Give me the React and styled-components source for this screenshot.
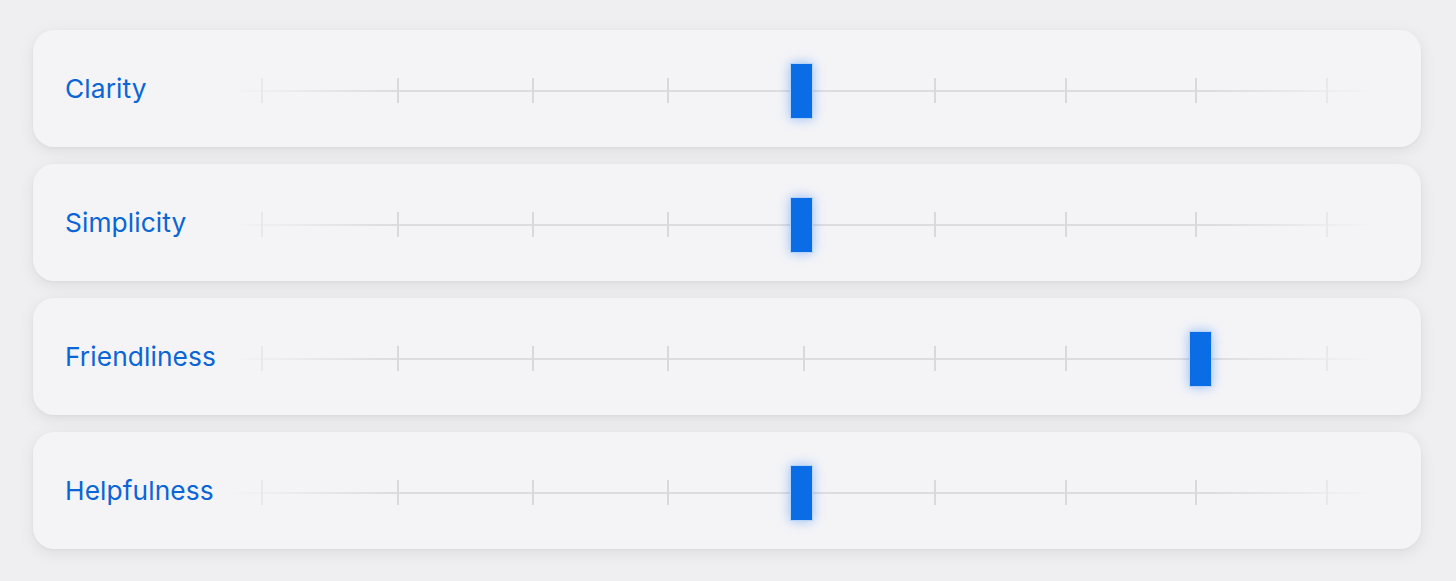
import React from 'react';
import styled, { createGlobalStyle } from 'styled-components';

const GlobalStyle = createGlobalStyle`
  html, body {
    margin: 0;
    padding: 0;
    background: #efeff1;
    font-family: Inter, "Noto Sans", sans-serif;
  }
`;

const Page = styled.div`
  display: flex;
  flex-direction: column;
  gap: 17px;
  padding: 30px 35px 31px 33px;
  box-sizing: border-box;
  width: 1456px;
  height: 581px;
`;

const Card = styled.div`
  display: flex;
  align-items: center;
  height: 117px;
  padding: 0 46px 0 32px;
  box-sizing: border-box;
  background: #f4f4f7;
  border-radius: 21px;
  box-shadow: 0 4px 16px rgba(0, 0, 0, 0.08), 0 1px 3px rgba(0, 0, 0, 0.04);
`;

const Label = styled.div`
  width: 165px;
  flex-shrink: 0;
  font-size: 26.3px;
  font-weight: 400;
  color: #0a65d6;
  letter-spacing: 0.1px;
`;

const Track = styled.div`
  position: relative;
  flex: 1;
  height: 60px;
  margin-top: 4px;
`;

const Line = styled.div`
  position: absolute;
  left: 0;
  right: 0;
  top: 29px;
  height: 2px;
  background: linear-gradient(
    to right,
    rgba(220, 220, 224, 0) 0%,
    #dddde1 14%,
    #dddde1 86%,
    rgba(220, 220, 224, 0) 100%
  );
`;

const Tick = styled.div`
  position: absolute;
  top: 17px;
  width: 2px;
  height: 25px;
  margin-left: -1px;
  background: ${p => (p.$faded ? '#e8e8eb' : '#d9d9dd')};
`;

const Thumb = styled.div`
  position: absolute;
  top: 2px;
  width: 23px;
  height: 56px;
  margin-left: -11.5px;
  box-sizing: border-box;
  background: #0a6de6;
  border: 1px solid rgba(255, 255, 255, 0.7);
  box-shadow: 0 0 12px rgba(20, 110, 240, 0.4);
  z-index: 1;
`;

const ticks = [2.79, 14.67, 26.46, 38.25, 50.13, 61.57, 73.01, 84.37, 95.81];

const rows = [
  { label: 'Clarity', value: 49.87 },
  { label: 'Simplicity', value: 49.87 },
  { label: 'Friendliness', value: 84.8 },
  { label: 'Helpfulness', value: 49.87 },
];

const Slider = ({ value }) => (
  <Track>
    <Line />
    {ticks.map((t, i) => (
      <Tick key={i} $faded={i === 0 || i === ticks.length - 1} style={{ left: `${t}%` }} />
    ))}
    <Thumb style={{ left: `${value}%` }} />
  </Track>
);

export default function App() {
  return (
    <>
      <GlobalStyle />
      <Page>
        {rows.map(r => (
          <Card key={r.label}>
            <Label>{r.label}</Label>
            <Slider value={r.value} />
          </Card>
        ))}
      </Page>
    </>
  );
}
